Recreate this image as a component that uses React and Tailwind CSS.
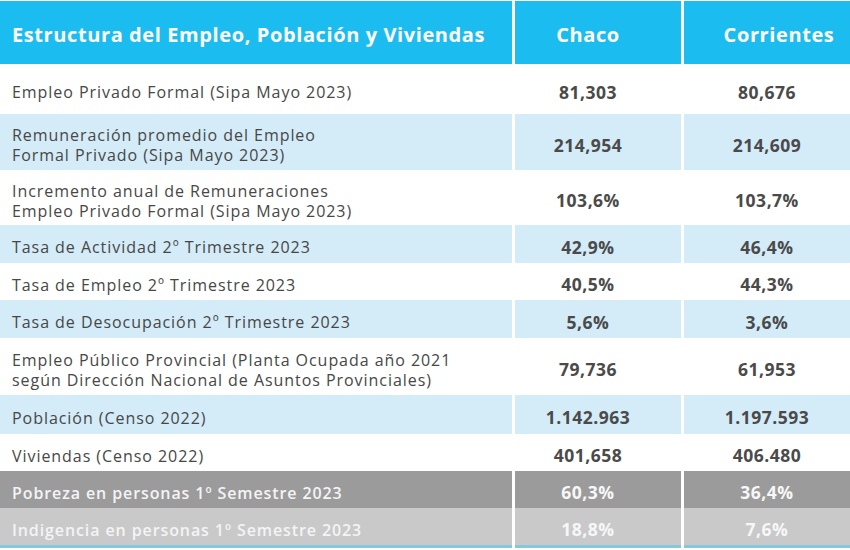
import React from "react"

const rows = [
  { label: ["Empleo Privado Formal (Sipa Mayo 2023)"], chaco: "81,303", ctes: "80,676", bg: "white", h: "h-[50px]" },
  { label: ["Remuneración promedio del Empleo", "Formal Privado (Sipa Mayo 2023)"], chaco: "214,954", ctes: "214,609", bg: "blue", h: "h-[56px]" },
  { label: ["Incremento anual de Remuneraciones", "Empleo Privado Formal (Sipa Mayo 2023)"], chaco: "103,6%", ctes: "103,7%", bg: "white", h: "h-[55px]" },
  { label: ["Tasa de Actividad 2º Trimestre 2023"], chaco: "42,9%", ctes: "46,4%", bg: "blue", h: "h-[38px]" },
  { label: ["Tasa de Empleo 2º Trimestre 2023"], chaco: "40,5%", ctes: "44,3%", bg: "white", h: "h-[37px]" },
  { label: ["Tasa de Desocupación 2º Trimestre 2023"], chaco: "5,6%", ctes: "3,6%", bg: "blue", h: "h-[38px]" },
  { label: ["Empleo Público Provincial (Planta Ocupada año 2021", "según Dirección Nacional de Asuntos Provinciales)"], chaco: "79,736", ctes: "61,953", bg: "white", h: "h-[57px]" },
  { label: ["Población (Censo 2022)"], chaco: "1.142.963", ctes: "1.197.593", bg: "blue", h: "h-[39px]" },
  { label: ["Viviendas (Censo 2022)"], chaco: "401,658", ctes: "406.480", bg: "white", h: "h-[37px]" },
  { label: ["Pobreza en personas 1º Semestre 2023"], chaco: "60,3%", ctes: "36,4%", bg: "dark", h: "h-[37px]" },
  { label: ["Indigencia en personas 1º Semestre 2023"], chaco: "18,8%", ctes: "7,6%", bg: "light", h: "h-[37px]" },
]

const bgClass = {
  white: "bg-white",
  blue: "bg-[#d4ebf8]",
  dark: "bg-[#9b9b9b]",
  light: "bg-[#c9c9c9]",
}

function Row({ row }) {
  const gray = row.bg === "dark" || row.bg === "light"
  const cell = `${bgClass[row.bg]} ${row.h} flex items-center`
  const labelText = gray
    ? "font-semibold text-[#f4f4f4] tracking-[0.9px]"
    : "text-[#474747] tracking-[0.95px]"
  const numText = gray ? "text-[#f7f7f7]" : "text-[#4a4a4a]"
  return (
    <>
      <div className={`${cell} pl-3 pt-[6px]`}>
        <div className={`text-[16px] leading-[20px] ${labelText}`}>
          {row.label.map((l) => (
            <div key={l}>{l}</div>
          ))}
        </div>
      </div>
      <div className={`${cell} justify-center pr-5 pt-[6px]`}>
        <span className={`text-[17.5px] font-bold tracking-[0.5px] ${numText}`}>{row.chaco}</span>
      </div>
      <div className={`${cell} justify-center pt-[6px]`}>
        <span className={`text-[17.5px] font-bold tracking-[0.5px] ${numText}`}>{row.ctes}</span>
      </div>
    </>
  )
}

export default function App() {
  return (
    <div className="w-[850px] h-[550px] bg-white overflow-hidden font-['Open_Sans',sans-serif]">
      <div className="pt-[1px] w-[847px]">
        <div className="grid grid-cols-[512px_166px_166px] gap-x-[3px]">
          <div className="bg-[#1bbdf0] h-[63px] flex items-center pl-3 pt-1">
            <span className="text-white font-bold text-[20px] tracking-[0.6px]">
              Estructura del Empleo, Población y Viviendas
            </span>
          </div>
          <div className="bg-[#1bbdf0] h-[63px] flex items-center justify-center pr-5 pt-1">
            <span className="text-white font-bold text-[20px] tracking-[0.6px]">Chaco</span>
          </div>
          <div className="bg-[#1bbdf0] h-[63px] flex items-center justify-center pl-6 pt-1">
            <span className="text-white font-bold text-[20px] tracking-[0.6px]">Corrientes</span>
          </div>
          {rows.map((r, i) => (
            <Row key={i} row={r} />
          ))}
          <div className="h-[3px] bg-[#86c8df]" />
          <div className="h-[3px] bg-[#86c8df]" />
          <div className="h-[3px] bg-[#86c8df]" />
        </div>
      </div>
    </div>
  )
}
